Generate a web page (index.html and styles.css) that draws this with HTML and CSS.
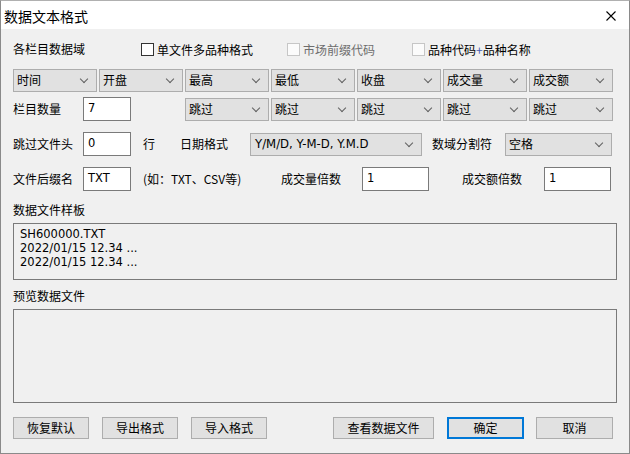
FILE: index.html
```html
<!DOCTYPE html>
<html lang="zh-CN">
<head>
<meta charset="utf-8">
<title>数据文本格式</title>
<link rel="stylesheet" href="styles.css">
</head>
<body>
<div class="win">
  <div class="titlebar">
    <span class="title">数据文本格式</span>
    <svg class="close" width="10" height="10" viewBox="0 0 10 10"><path d="M0.5 0.5 L9.5 9.5 M9.5 0.5 L0.5 9.5" stroke="#000" stroke-width="1.1" fill="none"/></svg>
  </div>
  <div class="content">
    <div class="row r1">
      <span class="lbl w128">各栏目数据域</span>
      <span class="chk w146"><span class="box"></span>单文件多品种格式</span>
      <span class="chk w125 disabled"><span class="box"></span>市场前缀代码</span>
      <span class="chk off"><span class="box"></span>品种代码<span class="plus">+</span>品种名称</span>
    </div>
    <div class="row r2">
      <span class="sel w84">时间</span>
      <span class="sel w84">开盘</span>
      <span class="sel w84">最高</span>
      <span class="sel w84">最低</span>
      <span class="sel w84">收盘</span>
      <span class="sel w84">成交量</span>
      <span class="sel w84">成交额</span>
    </div>
    <div class="row r3">
      <span class="lbl w70">栏目数量</span>
      <span class="inp w48">7</span>
      <span class="sel w84 ml54">跳过</span>
      <span class="sel w84">跳过</span>
      <span class="sel w84">跳过</span>
      <span class="sel w84">跳过</span>
      <span class="sel w84">跳过</span>
    </div>
    <div class="row r4">
      <span class="lbl w70">跳过文件头</span>
      <span class="inp w48">0</span>
      <span class="lbl ml12 w37">行</span>
      <span class="lbl w70">日期格式</span>
      <span class="sel w172 latin">Y/M/D, Y-M-D, Y.M.D</span>
      <span class="lbl ml10 w73">数域分割符</span>
      <span class="sel w107">空格</span>
    </div>
    <div class="row r5">
      <span class="lbl w70">文件后缀名</span>
      <span class="inp w48">TXT</span>
      <span class="lbl ml12 w138">(如：TXT、CSV等)</span>
      <span class="lbl w81">成交量倍数</span>
      <span class="inp w67">1</span>
      <span class="lbl ml33 w82">成交额倍数</span>
      <span class="inp w67">1</span>
    </div>
    <div class="caption c1">数据文件样板</div>
    <div class="sample">SH600000.TXT<br>2022/01/15 12.34 ...<br>2022/01/15 12.34 ...</div>
    <div class="caption c2">预览数据文件</div>
    <div class="preview"></div>
    <div class="row buttons">
      <span class="btn w76">恢复默认</span>
      <span class="btn w76 ml13">导出格式</span>
      <span class="btn w76 ml13">导入格式</span>
      <span class="btn w101 ml66">查看数据文件</span>
      <span class="btn w77 ml13 default">确定</span>
      <span class="btn w77 ml12">取消</span>
    </div>
  </div>
</div>
</body>
</html>
```
FILE: styles.css
```css
* { box-sizing: border-box; }
html, body { margin: 0; padding: 0; background: #f0f0f0; }
body { font-family: "Noto Sans CJK SC", "DejaVu Sans", sans-serif; font-size: 12px; color: #000; }

.win {
  width: 630px; height: 454px;
  border: 1px solid #8a8a8a;
  border-top-color: #b0b0b0;
  background: #f0f0f0;
  display: flex; flex-direction: column;
}
.titlebar {
  height: 28px; background: #fff;
  display: flex; align-items: center; justify-content: space-between;
  padding: 0 13px 0 3px;
}
.title { font-size: 14px; line-height: 16px; margin-top: 1px; }
.close { display: block; margin-top: 1px; }

.content { padding: 0 12px; }
.row { display: flex; align-items: center; }
.r1 { height: 22px; margin-top: 9px; }
.r2 { height: 23px; margin-top: 9px; gap: 2px; }
.r3 { height: 24px; margin-top: 5px; }
.r3 .sel + .sel { margin-left: 2px; }
.r4 { height: 24px; margin-top: 11px; }
.r5 { height: 24px; margin-top: 11px; }

.lbl { white-space: nowrap; line-height: 16px; }
.w37 { width: 37px; } .w48 { width: 48px; } .w67 { width: 67px; } .w70 { width: 70px; }
.w73 { width: 73px; } .w76 { width: 76px; } .w77 { width: 77px; } .w81 { width: 81px; }
.w82 { width: 82px; } .w84 { width: 84px; } .w101 { width: 101px; } .w107 { width: 107px; }
.w125 { width: 125px; } .w128 { width: 128px; } .w138 { width: 138px; } .w146 { width: 146px; }
.w172 { width: 172px; }
.ml10 { margin-left: 10px; } .ml12 { margin-left: 12px; } .ml13 { margin-left: 13px; }
.ml33 { margin-left: 33px; } .ml54 { margin-left: 54px; } .ml66 { margin-left: 66px; }

.chk { display: flex; align-items: center; white-space: nowrap; }
.chk .box {
  width: 13px; height: 13px; border: 1px solid #333; background: #fff;
  margin-right: 3px; flex: none;
}
.chk.disabled { color: #6d6d6d; }
.chk.disabled .box, .chk.off .box { border-color: #c6c6c6; background: #fbfbfb; }
.plus { color: #4a5fb0; }

.sel {
  position: relative; height: 23px; flex: none;
  background: #e1e1e1; border: 1px solid #adadad;
  padding-left: 3px; line-height: 20px; white-space: nowrap;
}
.sel::after {
  content: ""; position: absolute; right: 9px; top: 6px;
  width: 5px; height: 5px;
  border-right: 1px solid #606060; border-bottom: 1px solid #606060;
  transform: rotate(45deg);
}
.sel.latin { font-family: "DejaVu Sans", sans-serif; font-size: 11.7px; padding-left: 4px; }

.inp {
  height: 24px; flex: none; background: #fff; border: 1px solid #7a7a7a;
  font-family: "DejaVu Sans", sans-serif; font-size: 11.5px;
  padding: 3px 0 0 4px; line-height: 14px;
}

.caption { height: 16px; line-height: 16px; }
.c1 { margin-top: 11px; }
.c2 { margin-top: 8px; }
.sample {
  margin-top: 5px; width: 604px; height: 57px;
  border: 1px solid #7a7a7a; background: #f0f0f0;
  font-family: "DejaVu Sans", sans-serif; font-size: 11.5px; line-height: 14px;
  padding: 3px 0 0 6px; color: #000;
}
.preview {
  margin-top: 5px; width: 604px; height: 94px;
  border: 1px solid #7a7a7a; background: #f0f0f0;
}
.buttons { height: 22px; margin-top: 14px; }
.btn {
  height: 22px; flex: none; background: #e1e1e1; border: 1px solid #adadad;
  display: flex; align-items: center; justify-content: center;
  line-height: 16px; white-space: nowrap;
}
.btn.default { border: 2px solid #0078d7; }
```
